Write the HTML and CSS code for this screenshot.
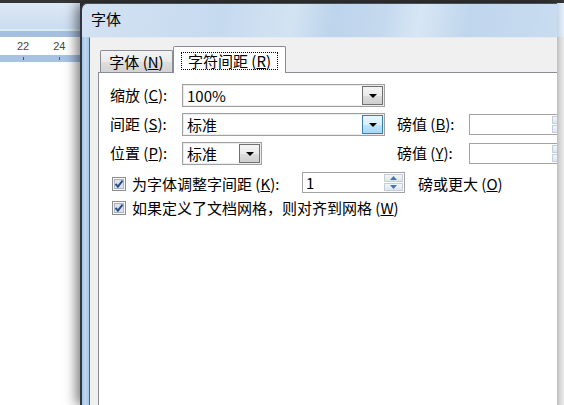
FILE: index.html
```html
<!DOCTYPE html>
<html lang="zh-CN">
<head>
<meta charset="utf-8">
<title>字体</title>
<link rel="stylesheet" href="styles.css">
</head>
<body>
<div class="screen">
  <div class="topband"></div>
  <div class="main">
    <div class="word">
      <div class="ribbon"></div>
      <div class="rline"></div>
      <div class="rband"></div>
      <div class="ruler"><span>22</span><span>24</span></div>
      <div class="rband2"><i class="tick"></i><i class="tick"></i></div>
      <div class="page"></div>
    </div>
    <div class="dialog">
      <div class="titlebar">字体</div>
      <div class="frame">
        <div class="client">
          <div class="tabs">
            <div class="tab">字体 (<u>N</u>)</div>
            <div class="tab active"><span class="focus">字符间距 (<u>R</u>)</span></div>
          </div>
          <div class="panel">
            <div class="fields">
              <span class="lbl">缩放 (<u>C</u>):</span>
              <div class="combo"><span class="val">100%</span><span class="drop"><i class="tri"></i></span></div>
              <span></span>
              <span></span>

              <span class="lbl">间距 (<u>S</u>):</span>
              <div class="combo"><span class="val">标准</span><span class="drop hot"><i class="tri"></i></span></div>
              <span class="lbl">磅值 (<u>B</u>):</span>
              <div class="numbox wide"><span class="val"></span><span class="spin"><i class="sbtn"><svg width="7" height="4" viewBox="0 0 7 4"><path d="M0 4H7L3.5 0Z"/></svg></i><i class="sbtn"><svg width="7" height="4" viewBox="0 0 7 4"><path d="M0 0H7L3.5 4Z"/></svg></i></span></div>

              <span class="lbl">位置 (<u>P</u>):</span>
              <div class="combo short"><span class="val">标准</span><span class="drop"><i class="tri"></i></span></div>
              <span class="lbl">磅值 (<u>Y</u>):</span>
              <div class="numbox wide"><span class="val"></span><span class="spin"><i class="sbtn"><svg width="7" height="4" viewBox="0 0 7 4"><path d="M0 4H7L3.5 0Z"/></svg></i><i class="sbtn"><svg width="7" height="4" viewBox="0 0 7 4"><path d="M0 0H7L3.5 4Z"/></svg></i></span></div>
            </div>

            <div class="check row4">
              <svg class="cb" width="14" height="14" viewBox="0 0 14 14"><rect x="0.5" y="0.5" width="13" height="13" fill="#f6f6f6" stroke="#8e8f8f"/><rect x="2.5" y="2.5" width="9" height="9" fill="#dde2ec" stroke="#aeb4c0"/><path d="M3.6 6.8L5.9 9.6L10.6 3.6" fill="none" stroke="#2c4c8c" stroke-width="2"/></svg>
              <span class="cblabel">为字体调整字间距 (<u>K</u>):</span>
              <div class="numbox kern"><span class="val">1</span><span class="spin"><i class="sbtn"><svg width="7" height="4" viewBox="0 0 7 4"><path d="M0 4H7L3.5 0Z"/></svg></i><i class="sbtn"><svg width="7" height="4" viewBox="0 0 7 4"><path d="M0 0H7L3.5 4Z"/></svg></i></span></div>
              <span class="after">磅或更大 (<u>O</u>)</span>
            </div>

            <div class="check row5">
              <svg class="cb" width="14" height="14" viewBox="0 0 14 14"><rect x="0.5" y="0.5" width="13" height="13" fill="#f6f6f6" stroke="#8e8f8f"/><rect x="2.5" y="2.5" width="9" height="9" fill="#dde2ec" stroke="#aeb4c0"/><path d="M3.6 6.8L5.9 9.6L10.6 3.6" fill="none" stroke="#2c4c8c" stroke-width="2"/></svg>
              <span class="cblabel free">如果定义了文档网格，则对齐到网格 (<u>W</u>)</span>
            </div>
          </div>
        </div>
      </div>
    </div>
    <div class="edge"><div class="edge-top"></div><div class="edge-body"></div></div>
  </div>
</div>
</body>
</html>
```
FILE: styles.css
```css
* { box-sizing: border-box; margin: 0; padding: 0; }
html, body { width: 564px; height: 405px; overflow: hidden; }
body {
  font-family: "Noto Sans CJK SC", "Noto Sans", sans-serif;
  font-size: 15px;
  color: #000;
  background: #fff;
}
u { text-decoration: underline; text-underline-offset: 1px; }

.screen { width: 564px; height: 405px; display: flex; flex-direction: column; background: #353535; }
.topband { height: 3px; flex: none; background: #353535; }
.main { flex: 1; display: flex; min-height: 0; }

/* Word window behind */
.word { width: 80px; flex: none; display: flex; flex-direction: column; background: #fff; }
.ribbon { height: 26px; background: linear-gradient(#dde8f5, #cbdcef); }
.rline { height: 2px; background: #d9ecf1; }
.rband { height: 6px; background: #a5bfdf; }
.ruler {
  height: 18px; background: #fff; display: flex; align-items: center;
  gap: 24px; padding-left: 17px;
  font-family: "Liberation Sans", sans-serif; font-size: 11px; color: #454545;
}
.rband2 { height: 7px; background: #a8c2e4; display: flex; align-items: center; gap: 35px; padding-left: 23px; }
.tick { display: block; width: 1px; height: 3px; background: #555; }
.page { flex: 1; background: #fff; }

/* Dialog */
.dialog {
  flex: 1; min-width: 0; display: flex; flex-direction: column;
  border-left: 2px solid #30363d; border-top: 1px solid #46525f;
  border-top-left-radius: 7px; overflow: hidden;
  background: linear-gradient(100deg, #d3e2f2 0px, #c6daef 140px, #d3e3f2 210px, #bdd4ec 250px, #c5d9ee 300px, #d7e6f4 335px, #c0d6ed 385px, #c9dcf0 475px);
  box-shadow: -4px 0 12px rgba(0, 0, 0, 0.5);
}
.titlebar { height: 33px; flex: none; padding: 4px 0 0 9px; line-height: 22px; white-space: nowrap; }
.frame {
  flex: 1; display: flex; padding-left: 7px; min-height: 0;
  background: linear-gradient(to right, #a2c1e4, #bfd7ef 3px, #a9c7e8 7px) left top / 7px 100% no-repeat, #c3d8ee;
}
.client {
  flex: 1; min-width: 0; display: flex; flex-direction: column; overflow: hidden;
  background: #f0f0f0; border-left: 1px solid #52606f; border-top: 1px solid #e4eaf0;
  padding: 8px 0 0 8px;
}

/* Tabs */
.tabs { height: 26px; flex: none; display: flex; align-items: flex-end; }
.tab {
  height: 22px; width: 73px; margin-left: 2px; flex: none;
  border: 1px solid #898c95; border-bottom: 0; border-radius: 2px 2px 0 0;
  background: linear-gradient(#f4f4f4, #e9e9e9 50%, #dedede 51%, #d3d3d3);
  display: flex; align-items: center; justify-content: center;
  line-height: 18px; white-space: nowrap;
}
.tab.active {
  height: 27px; width: 113px; margin-left: 0; margin-bottom: -1px;
  background: #fff; align-items: flex-start; padding-top: 5px;
  position: relative; z-index: 1;
}
.focus {
  display: block; width: 97px; height: 18px; line-height: 16px;
  border: 1px dotted #000; text-align: center;
}

/* Panel */
.panel {
  flex: 1; background: #fff; border-top: 1px solid #898c95; border-left: 1px solid #898c95;
  padding: 10px 0 0 11px;
}
.fields {
  display: grid; grid-template-columns: 72px 215px 72px 104px;
  grid-template-rows: repeat(3, 24px); row-gap: 5px; align-items: center;
}
.lbl { line-height: 20px; white-space: nowrap; }

.combo {
  width: 203px; height: 23px; border: 1px solid #a0a0a0; background: #fff;
  display: flex; padding: 1px; box-shadow: inset 0 0 0 1px #ececec;
}
.combo.short { width: 80px; }
.val { flex: 1; padding-left: 3px; line-height: 19px; white-space: nowrap; }
.drop {
  width: 21px; flex: none; border: 1px solid #707070;
  background: linear-gradient(#f3f3f3, #ebebeb 50%, #dddddd 51%, #cfcfcf);
  display: flex; align-items: center; justify-content: center;
}
.drop.hot { border-color: #3c7fb1; background: linear-gradient(#eaf6fd, #d9f0fc 50%, #bee6fd 51%, #a7d9f5); }
.tri { display: block; width: 0; height: 0; border-left: 4px solid transparent; border-right: 4px solid transparent; border-top: 4px solid #000; margin-top: 1px; }

.numbox {
  height: 21px; border: 1px solid #a3a3a3; background: #fff;
  display: flex; padding: 1px;
}
.numbox.wide { width: 104px; }
.numbox.kern { width: 103px; align-self: flex-start; }
.numbox .val { padding-left: 2px; line-height: 17px; }
.spin { width: 19px; flex: none; display: flex; flex-direction: column; gap: 1px; }
.sbtn {
  flex: 1; display: flex; align-items: center; justify-content: center;
  border: 1px solid #c5cdd8; background: linear-gradient(#f3f6fa, #dde5ef);
}
.sbtn svg { display: block; fill: #4b72b5; }

/* Checkbox rows */
.check { display: flex; align-items: center; }
.row4 { height: 24px; margin-top: 7px; }
.row5 { height: 21px; margin-top: 1px; }
.cb { display: block; flex: none; margin-left: 2px; }
.cblabel { margin-left: 6px; width: 170px; flex: none; line-height: 20px; white-space: nowrap; }
.cblabel.free { width: auto; }
.after { margin-left: 13px; line-height: 20px; white-space: nowrap; }

/* right edge of screenshot */
.edge { width: 7px; flex: none; display: flex; flex-direction: column; }
.edge-top { height: 34px; background: linear-gradient(to right, #c4d7eb, #e8eff7); }
.edge-body { flex: 1; background: linear-gradient(to right, #bdbdbd, #d6d6d6 40%, #ebebeb); }
```
